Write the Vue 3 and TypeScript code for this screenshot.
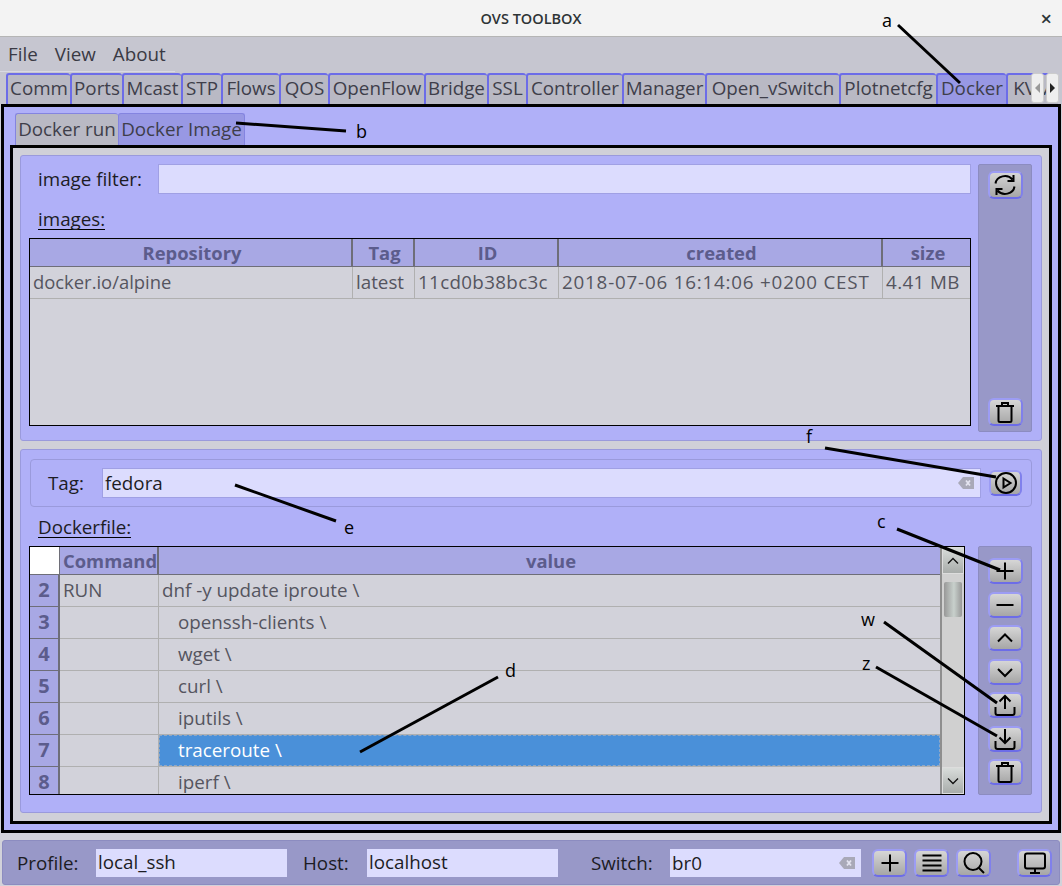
<template>
  <div class="window">
    <header class="titlebar">
      <span class="title">OVS TOOLBOX</span>
      <span class="close">×</span>
    </header>
    <nav class="menubar">
      <span v-for="m in menus" :key="m">{{ m }}</span>
    </nav>
    <div class="tabbar">
      <div
        v-for="t in mainTabs"
        :key="t.label"
        class="tab"
        :class="{ active: t.label === 'Docker' }"
        :style="{ width: t.width + 'px' }"
      >
        {{ t.label }}
      </div>
      <div class="tab-scroll">
        <button class="scroll-btn"><i class="arrow left"></i></button>
        <button class="scroll-btn"><i class="arrow right"></i></button>
      </div>
    </div>

    <main class="outer">
      <div class="subtabs">
        <div class="tab sub">Docker run</div>
        <div class="tab sub active wide">Docker Image</div>
      </div>
      <div class="inner">
        <section class="panel images-panel">
          <div class="panel-main">
            <div class="filter-row">
              <label>image filter:</label>
              <div class="input"></div>
            </div>
            <div class="section-label">images:</div>
            <div class="table images-table">
              <div class="thead">
                <div v-for="h in imageHeads" :key="h" class="th">{{ h }}</div>
              </div>
              <div class="row">
                <div v-for="(c, i) in imageRow" :key="c" class="td" :class="`col-${i}`">{{ c }}</div>
              </div>
            </div>
          </div>
          <aside class="side">
            <button class="btn">
              <svg viewBox="0 0 24 24"><path d="M2.500 10.500A9.500 8.500 0 0 1 19.500 6.500M20.500 2v6h-6M21.500 13.500A9.500 8.500 0 0 1 4.500 17.500M3.500 22v-6h6" /></svg>
            </button>
            <button class="btn push-end">
              <svg viewBox="0 0 24 24"><path d="M3 6h18M9 6V3h6v3M5.500 6v14.500a1.500 1.500 0 0 0 1.500 1.500h10a1.500 1.500 0 0 0 1.500-1.500V6" /></svg>
            </button>
          </aside>
        </section>

        <section class="panel docker-panel">
          <div class="tag-group">
            <label>Tag:</label>
            <div class="input tag-input">
              <span>fedora</span>
              <svg class="clear" viewBox="0 0 16 12"><path d="M0 6 5 0h11v12H5z" fill="#a9a9b8" /><path d="M8 3.500l4 5M12 3.500l-4 5" stroke="#e4e4f0" stroke-width="1.800" /></svg>
            </div>
            <button class="btn run">
              <svg viewBox="0 0 24 24"><circle cx="12" cy="12" r="10" /><path d="M9.500 7.500v9l7-4.500z" /></svg>
            </button>
          </div>
          <div class="section-label">Dockerfile:</div>
          <div class="docker-body">
            <div class="table docker-table">
              <div class="docker-grid">
                <div class="thead">
                  <div class="corner"></div>
                  <div class="th">Command</div>
                  <div class="th">value</div>
                </div>
                <div
                  v-for="r in dockerRows"
                  :key="r.n"
                  class="row"
                >
                  <div class="rowhead">{{ r.n }}</div>
                  <div class="td">{{ r.cmd }}</div>
                  <div class="td" :class="{ selected: r.n === 7, indent: r.n > 2 }">{{ r.value }}</div>
                </div>
              </div>
              <div class="scrollbar">
                <button class="sb-btn"><svg viewBox="0 0 12 8"><path d="M1 6.500 6 1.500l5 5" /></svg></button>
                <div class="thumb"></div>
                <button class="sb-btn bottom"><svg viewBox="0 0 12 8"><path d="M1 1.500l5 5 5-5" /></svg></button>
              </div>
            </div>
            <aside class="side tools">
              <button class="btn"><svg viewBox="0 0 24 24"><path d="M12 3.500v17M3.500 12h17" /></svg></button>
              <button class="btn"><svg viewBox="0 0 24 24"><path d="M3.500 12h17" /></svg></button>
              <button class="btn"><svg viewBox="0 0 24 24"><path d="M5 15.500l7-7 7 7" /></svg></button>
              <button class="btn"><svg viewBox="0 0 24 24"><path d="M5 9l7 7 7-7" /></svg></button>
              <button class="btn"><svg viewBox="0 0 24 24"><path d="M12 16V3M6.500 8.500 12 3l5.500 5.500M2.500 14v6a2 2 0 0 0 2 2h15a2 2 0 0 0 2-2v-6" /></svg></button>
              <button class="btn"><svg viewBox="0 0 24 24"><path d="M12 2v14M6.500 10.500 12 16l5.500-5.500M2.500 14v6a2 2 0 0 0 2 2h15a2 2 0 0 0 2-2v-6" /></svg></button>
              <button class="btn"><svg viewBox="0 0 24 24"><path d="M3 6h18M9 6V3h6v3M5.500 6v14.500a1.500 1.500 0 0 0 1.500 1.500h10a1.500 1.500 0 0 0 1.500-1.500V6" /></svg></button>
            </aside>
          </div>
        </section>
      </div>
    </main>

    <footer class="statusbar">
      <label class="profile-label">Profile:</label>
      <div class="input status-input">local_ssh</div>
      <label class="host-label">Host:</label>
      <div class="input status-input">localhost</div>
      <label class="switch-label">Switch:</label>
      <div class="input status-input tag-input">
        <span>br0</span>
        <svg class="clear" viewBox="0 0 16 12"><path d="M0 6 5 0h11v12H5z" fill="#a9a9b8" /><path d="M8 3.500l4 5M12 3.500l-4 5" stroke="#e4e4f0" stroke-width="1.800" /></svg>
      </div>
      <div class="status-btns">
        <button class="btn"><svg viewBox="0 0 24 24"><path d="M12 3.500v17M3.500 12h17" /></svg></button>
        <button class="btn"><svg viewBox="0 0 24 24"><path d="M2.500 4.500h19M2.500 9.500h19M2.500 14.500h19M2.500 19.500h19" /></svg></button>
        <button class="btn"><svg viewBox="0 0 24 24"><circle cx="11" cy="10.500" r="8.500" /><path d="M17 17l5 5" /></svg></button>
      </div>
      <button class="btn monitor"><svg viewBox="0 0 24 24"><rect x="2" y="2.500" width="20" height="15" rx="2" /><path d="M12 17.500v4M7 22h10" /></svg></button>
    </footer>

    <svg class="callouts" viewBox="0 0 1062 886">
      <line v-for="l in callouts" :key="l.label" :x1="l.x1" :y1="l.y1" :x2="l.x2" :y2="l.y2" />
      <text v-for="l in callouts" :key="'t' + l.label" :x="l.tx" :y="l.ty">{{ l.label }}</text>
    </svg>
  </div>
</template>

<script setup lang="ts">
const menus = ['File', 'View', 'About']

const mainTabs = [
  { label: 'Comm', width: 64 },
  { label: 'Ports', width: 52 },
  { label: 'Mcast', width: 59 },
  { label: 'STP', width: 40 },
  { label: 'Flows', width: 58 },
  { label: 'QOS', width: 49 },
  { label: 'OpenFlow', width: 96 },
  { label: 'Bridge', width: 63 },
  { label: 'SSL', width: 39 },
  { label: 'Controller', width: 96 },
  { label: 'Manager', width: 83 },
  { label: 'Open_vSwitch', width: 134 },
  { label: 'Plotnetcfg', width: 97 },
  { label: 'Docker', width: 70 },
  { label: 'KVM', width: 52 },
]

const imageHeads = ['Repository', 'Tag', 'ID', 'created', 'size']
const imageRow = ['docker.io/alpine', 'latest', '11cd0b38bc3c', '2018-07-06 16:14:06 +0200 CEST', '4.41 MB']

const dockerRows = [
  { n: 2, cmd: 'RUN', value: 'dnf -y update iproute \\' },
  { n: 3, cmd: '', value: 'openssh-clients \\' },
  { n: 4, cmd: '', value: 'wget \\' },
  { n: 5, cmd: '', value: 'curl \\' },
  { n: 6, cmd: '', value: 'iputils \\' },
  { n: 7, cmd: '', value: 'traceroute \\' },
  { n: 8, cmd: '', value: 'iperf \\' },
]

const callouts = [
  { label: 'a', x1: 898, y1: 25, x2: 960, y2: 83, tx: 882, ty: 27 },
  { label: 'b', x1: 236, y1: 123, x2: 346, y2: 131, tx: 356, ty: 138 },
  { label: 'c', x1: 897, y1: 529, x2: 1000, y2: 570, tx: 877, ty: 528 },
  { label: 'd', x1: 360, y1: 752, x2: 498, y2: 677, tx: 505, ty: 677 },
  { label: 'e', x1: 235, y1: 485, x2: 336, y2: 521, tx: 344, ty: 534 },
  { label: 'f', x1: 825, y1: 448, x2: 996, y2: 477, tx: 806, ty: 443 },
  { label: 'w', x1: 884, y1: 622, x2: 997, y2: 703, tx: 861, ty: 626 },
  { label: 'z', x1: 876, y1: 667, x2: 997, y2: 736, tx: 862, ty: 670 },
]
</script>

<style>
body {
  background: #d0d0d8;
}
</style>

<style scoped>
.window {
  position: relative;
  width: 1062px;
  height: 886px;
  overflow: hidden;
  background: #d2d2da;
  display: flex;
  flex-direction: column;
  font-family: "Open Sans", "Noto Sans", sans-serif;
  font-size: 18.800px;
  color: #1c1c24;
}

.titlebar {
  height: 36px;
  flex: none;
  background: #f3f3f3;
  border-bottom: 1px solid #b5b5b5;
  display: flex;
  align-items: center;
  justify-content: center;
  position: relative;
}

.title {
  font-size: 14.500px;
  font-weight: 600;
  color: #2e3436;
}

.close {
  position: absolute;
  right: 10px;
  top: 5px;
  font-size: 20px;
  font-weight: 600;
  color: #2e3436;
}

.menubar {
  box-sizing: border-box;
  height: 36px;
  flex: none;
  background: #c6c6d0;
  display: flex;
  align-items: center;
  gap: 17px;
  padding: 0 0 3px 8px;
  color: #3a3a44;
  position: relative;
}

.menubar::after {
  content: "";
  position: absolute;
  left: 0;
  bottom: 1px;
  width: 175px;
  height: 1px;
  background: #d9d9e2;
}

.tabbar {
  height: 31px;
  flex: none;
  background: #c6c6d0;
  display: flex;
  padding-left: 6px;
  overflow: hidden;
  position: relative;
}

.tab {
  flex: none;
  box-sizing: border-box;
  border: 1px solid #6c6ce8;
  border-width: 2px 0 0 2px;
  border-radius: 3px 3px 0 0;
  background: #b9b9c4;
  color: #3e3e4a;
  display: flex;
  align-items: center;
  justify-content: center;
  white-space: nowrap;
  overflow: hidden;
  padding-bottom: 3px;
}

.tab.active {
  background: #9898e4;
}

.tab-scroll {
  position: absolute;
  right: 3px;
  top: 0;
  display: flex;
  gap: 2px;
}

.scroll-btn {
  width: 13px;
  height: 30px;
  padding: 0;
  border: 1px solid #ccc;
  border-radius: 3px;
  background: #eee;
  display: flex;
  align-items: center;
  justify-content: center;
}

.arrow {
  width: 0;
  height: 0;
  border-top: 5px solid transparent;
  border-bottom: 5px solid transparent;
}

.arrow.left {
  border-right: 5px solid #999;
}

.arrow.right {
  border-left: 5px solid #222;
}

.outer {
  flex: none;
  box-sizing: border-box;
  height: 729px;
  margin-left: 1px;
  width: 1060px;
  border: 3px solid #000;
  background: #b0b0f8;
  padding: 6px 6px 6px 6px;
  display: flex;
  flex-direction: column;
}

.subtabs {
  height: 32px;
  flex: none;
  display: flex;
  padding-left: 5px;
}

.tab.sub {
  width: 103px;
  border-color: #8484e0;
  border-width: 1px 0 0 1px;
  padding-bottom: 2px;
}

.tab.sub.wide {
  width: 127px;
  border-right-width: 1px;
}

.inner {
  flex: 1;
  border: 3px solid #000;
  background: #d0d0d8;
  padding: 7px 7px 8px 7px;
  display: flex;
  flex-direction: column;
  gap: 8px;
}

.panel {
  box-sizing: border-box;
  background: #b0b0f8;
  border: 1px solid #9a9adc;
  border-radius: 3px;
}

.images-panel {
  height: 286px;
  padding: 8px 9px 8px 8px;
  display: flex;
  gap: 7px;
}

.panel-main {
  width: 942px;
  display: flex;
  flex-direction: column;
}

.filter-row {
  height: 30px;
  flex: none;
  display: flex;
  align-items: center;
  padding-left: 9px;
}

.filter-row label {
  width: 120px;
  flex: none;
}

.filter-row .input {
  flex: 1;
  height: 100%;
}

.input {
  box-sizing: border-box;
  background: #dcdcfe;
  border: 1px solid #a0a0e4;
}

.section-label {
  width: fit-content;
  margin: 15px 0 8px 9px;
  height: 20px;
  line-height: 20px;
  border-bottom: 1px solid #000;
}

.table {
  box-sizing: border-box;
  border: 1px solid #000;
  background: #d2d2da;
  color: #55555f;
}

.images-table {
  height: 188px;
}

.thead {
  display: grid;
  height: 28px;
  background: #a8a8e4;
  border-bottom: 1px solid #6e6e78;
  box-sizing: border-box;
}

.images-table .thead,
.images-table .row {
  grid-template-columns: 323px 62px 144px 324px 87px;
}

.th {
  font-size: 18.400px;
  font-weight: 700;
  color: #5c5c8c;
  text-align: center;
  line-height: 27px;
  padding-left: 3px;
  border-right: 2px solid #6e6e78;
  white-space: nowrap;
  overflow: hidden;
}

.th:last-child {
  border-right: 0;
}

.row {
  display: grid;
  height: 32px;
  box-sizing: border-box;
  border-bottom: 1px solid #b0b0b0;
}

.td {
  padding-left: 3px;
  line-height: 30px;
  border-right: 1px solid #b0b0b0;
  white-space: nowrap;
  overflow: hidden;
}

.td:last-child {
  border-right: 0;
}

.col-0 {
  font-size: 18.400px;
}

.col-2 {
  letter-spacing: 0.330px;
}

.col-3 {
  letter-spacing: 0.800px;
}

.col-4 {
  letter-spacing: 0.400px;
}

.side {
  box-sizing: border-box;
  width: 54px;
  flex: none;
  background: #9898c8;
  border: 1px solid #8c8cc0;
  border-radius: 2px;
  display: flex;
  flex-direction: column;
  align-items: center;
  padding: 6px 0 5px;
}

.btn {
  box-sizing: border-box;
  width: 35px;
  height: 28px;
  flex: none;
  padding: 0;
  border: 2px solid #9c9cf4;
  border-bottom-color: #6c6ce8;
  border-right-color: #8080ec;
  border-radius: 6px;
  background: linear-gradient(#d6d6d6, #a6a6a6);
  display: flex;
  align-items: center;
  justify-content: center;
}

.btn svg {
  width: 24px;
  height: 24px;
  fill: none;
  stroke: #000;
  stroke-width: 2;
}

.push-end {
  margin-top: auto;
}

.docker-panel {
  flex: 1;
  padding: 9px 9px 0 8px;
}

.tag-group {
  box-sizing: border-box;
  height: 48px;
  margin-left: 1px;
  border: 1px solid #9a9adc;
  border-radius: 4px;
  display: flex;
  align-items: center;
  padding-left: 17px;
}

.tag-group label {
  width: 54px;
  flex: none;
}

.tag-group .tag-input {
  width: 879px;
  height: 30px;
}

.tag-input {
  display: flex;
  align-items: center;
  justify-content: space-between;
  padding: 0 6px 0 2px;
}

.clear {
  width: 16px;
  height: 12px;
  flex: none;
}

.btn.run {
  margin-left: 8px;
  width: 33px;
  height: 26px;
}

.docker-panel .section-label {
  margin: 10px 0 8px 9px;
  line-height: 21px;
}

.docker-body {
  display: flex;
  height: 249px;
  gap: 13px;
}

.docker-table {
  width: 936px;
  flex: none;
  display: flex;
  overflow: hidden;
}

.docker-grid {
  width: 910px;
  flex: none;
}

.docker-table .thead,
.docker-table .row {
  grid-template-columns: 30px 99px 781px;
}

.corner {
  background: #fff;
  border-right: 1px solid #6e6e78;
}

.rowhead {
  background: #a8a8e4;
  color: #5c5c8c;
  font-weight: 700;
  font-size: 20px;
  text-align: center;
  line-height: 30px;
  border-right: 2px solid #6e6e78;
  border-bottom: 1px solid #6e6e78;
  margin-bottom: -1px;
}

.td.indent {
  padding-left: 19px;
}

.td.selected {
  background: #4a90d9;
  color: #fff;
  outline: 1px dashed #8ea8c8;
  outline-offset: -1px;
}

.scrollbar {
  flex: 1;
  background: #d0d0d0;
  border-left: 2px solid #8e8e8e;
  display: flex;
  flex-direction: column;
  align-items: center;
}

.sb-btn {
  width: 100%;
  height: 27px;
  flex: none;
  padding: 0;
  border: 1px solid #ddd;
  background: linear-gradient(#d8dcda, #a8acaa);
  display: flex;
  align-items: center;
  justify-content: center;
}

.sb-btn.bottom {
  margin-top: auto;
}

.sb-btn svg {
  width: 12px;
  height: 8px;
  fill: none;
  stroke: #111;
  stroke-width: 1.300;
}

.thumb {
  width: 18px;
  height: 35px;
  margin-top: 8px;
  border-radius: 2px;
  background: linear-gradient(90deg, #989898, #c8d0cc 55%, #989898);
}

.tools {
  padding: 11px 0 0;
  gap: 7.500px;
  height: 249px;
}

.tools .btn {
  height: 26px;
}

.statusbar {
  box-sizing: border-box;
  height: 45px;
  width: 1058px;
  margin: 7px 0 0 2px;
  flex: none;
  background: #9898c8;
  border: 1px solid #8c8cc0;
  border-radius: 3px;
  display: flex;
  align-items: center;
  padding-left: 14px;
}

.status-input {
  height: 28px;
  width: 191px;
  flex: none;
  line-height: 26px;
  padding-left: 2px;
  border: 0;
  color: #1c1c24;
}

.profile-label {
  width: 79px;
}

.host-label {
  width: 64px;
  margin-left: 16px;
}

.switch-label {
  width: 79px;
  margin-left: 33px;
}

.status-btns {
  display: flex;
  gap: 7px;
  margin-left: 11px;
}

.monitor {
  margin-left: 26px;
}

.callouts {
  position: absolute;
  inset: 0;
  width: 1062px;
  height: 886px;
  pointer-events: none;
}

.callouts line {
  stroke: #000;
  stroke-width: 3;
}

.callouts text {
  font-family: "Open Sans", sans-serif;
  font-size: 18px;
  fill: #000;
}
</style>
